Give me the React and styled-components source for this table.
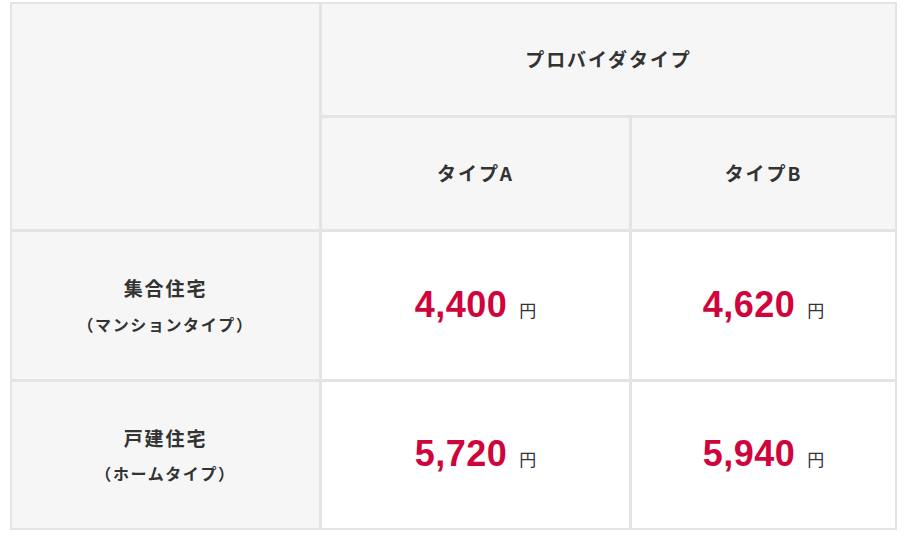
import React from 'react'
import styled, { createGlobalStyle } from 'styled-components'

const GlobalStyle = createGlobalStyle`
  body {
    margin: 0;
    background: #fff;
    font-family: "Noto Sans CJK JP", "Noto Sans", sans-serif;
    color: #333;
  }
`

const Wrapper = styled.div`
  padding: 2px 0 0 10px;
`

const PriceTable = styled.div`
  display: grid;
  width: 887px;
  box-sizing: border-box;
  grid-template-columns: 307px 307px 263px;
  grid-template-rows: 111px 111px 147px 146px;
  gap: 3px;
  padding: 2px;
  background: #e4e4e4;
`

const Cell = styled.div`
  display: flex;
  flex-direction: column;
  align-items: center;
  justify-content: center;
  background: ${(p) => (p.$head ? '#f6f6f6' : '#fff')};
  grid-column: ${(p) => p.$span || 'auto'};
  grid-row: ${(p) => p.$rows || 'auto'};
`

const HeadText = styled.span`
  font-size: 19px;
  line-height: 1.2;
  font-weight: 700;
  letter-spacing: 0.1em;
  color: #333;
`

const SubText = styled.span`
  font-size: 16px;
  line-height: 1.2;
  font-weight: 700;
  letter-spacing: 0.1em;
  color: #333;
  margin-top: 15px;
`

const Price = styled.div`
  display: flex;
  align-items: baseline;
  margin-top: -2px;
`

const Amount = styled.span`
  font-family: "Liberation Sans", Arial, sans-serif;
  font-size: 36px;
  font-weight: 700;
  letter-spacing: 0.5px;
  color: #d0043c;
`

const Yen = styled.span`
  font-size: 17px;
  color: #333;
  margin-left: 12px;
`

const rows = [
  { name: '集合住宅', sub: '（マンションタイプ）', a: '4,400', b: '4,620' },
  { name: '戸建住宅', sub: '（ホームタイプ）', a: '5,720', b: '5,940' },
]

const App = () => (
  <>
    <GlobalStyle />
    <Wrapper>
      <PriceTable>
        <Cell $head $rows="span 2" />
        <Cell $head $span="span 2">
          <HeadText>プロバイダタイプ</HeadText>
        </Cell>
        <Cell $head>
          <HeadText>タイプA</HeadText>
        </Cell>
        <Cell $head>
          <HeadText>タイプB</HeadText>
        </Cell>
        {rows.map((r) => (
          <React.Fragment key={r.name}>
            <Cell $head>
              <HeadText>{r.name}</HeadText>
              <SubText>{r.sub}</SubText>
            </Cell>
            <Cell>
              <Price>
                <Amount>{r.a}</Amount>
                <Yen>円</Yen>
              </Price>
            </Cell>
            <Cell>
              <Price>
                <Amount>{r.b}</Amount>
                <Yen>円</Yen>
              </Price>
            </Cell>
          </React.Fragment>
        ))}
      </PriceTable>
    </Wrapper>
  </>
)

export default App
